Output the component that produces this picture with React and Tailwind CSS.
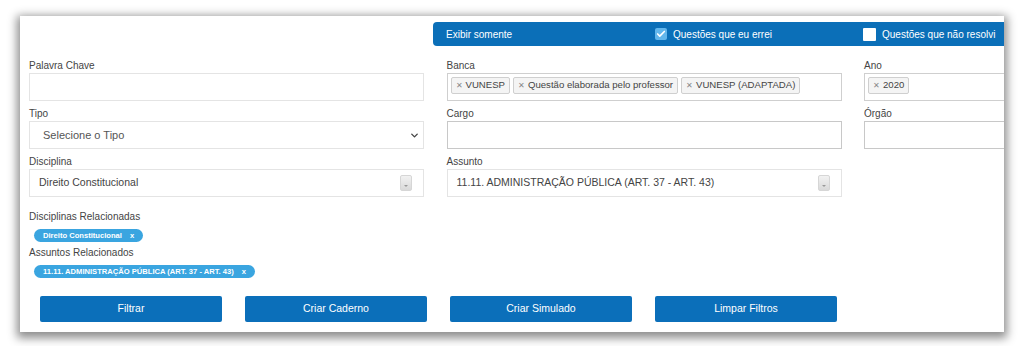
import { Check, ChevronDown } from 'lucide-react'

const FONT = { fontFamily: '"Liberation Sans", Arial, sans-serif' }

function Label({ children }) {
  return <div className="h-[14px] text-[10px] leading-[14px] text-[#444]">{children}</div>
}

function TextBox({ children, className = '' }) {
  return (
    <div className={`h-[28px] bg-white border flex items-center ${className}`}>
      {children}
    </div>
  )
}

function GrayChip({ children }) {
  return (
    <span className="h-[17px] px-[4px] flex items-center gap-[3px] bg-[#f4f4f4] border border-[#cfcfcf] rounded-[2px] text-[9.6px] text-[#444] whitespace-nowrap">
      <span className="text-[8px] text-[#888]">✕</span>
      {children}
    </span>
  )
}

function SelectArrow() {
  return (
    <div className="w-[12px] h-[16px] rounded-[2px] border border-[#d6d6d6] bg-gradient-to-b from-[#f2f2f2] to-[#d9d9d9] flex items-end justify-center pb-[3px]">
      <span className="w-0 h-0 border-x-[2px] border-x-transparent border-t-[2px] border-t-[#999]" />
    </div>
  )
}

function BluePill({ children }) {
  return (
    <span className="h-[13px] px-[9px] inline-flex items-center gap-[8px] rounded-full bg-[#3aa5e0] text-white text-[7.6px] font-bold whitespace-nowrap">
      {children}
      <span className="font-bold">x</span>
    </span>
  )
}

function ActionButton({ children }) {
  return (
    <button className="w-[182px] h-[26px] rounded-[2px] bg-[#0b6fba] text-white text-[10.5px]">
      {children}
    </button>
  )
}

export default function App() {
  return (
    <div className="w-[1024px] h-[346px] bg-white overflow-hidden pt-[16px] pl-[20px]" style={FONT}>
      <div className="w-[984px] h-[316px] bg-white overflow-hidden shadow-[0_3px_9px_3px_rgba(0,0,0,0.45)]">
        {/* top bar */}
        <div className="mt-[6px] ml-[413px] h-[24px] bg-[#0b6fb8] rounded-l-[4px] flex items-center text-white text-[10px]">
          <div className="w-[222px] pl-[13px]">Exibir somente</div>
          <div className="w-[208px] flex items-center gap-[6px]">
            <span className="w-[12px] h-[12px] rounded-[2px] bg-[#62b6ec] flex items-center justify-center">
              <Check size={10} strokeWidth={4} className="text-white" />
            </span>
            Questões que eu errei
          </div>
          <div className="flex items-center gap-[6px] whitespace-nowrap">
            <span className="w-[13px] h-[13px] bg-white rounded-[1px]" />
            Questões que não resolvi
          </div>
        </div>

        {/* fields */}
        <div className="mt-[13px] ml-[9px] grid grid-cols-[395px_395px_395px] gap-x-[22.5px] gap-y-[6px]">
          <div>
            <Label>Palavra Chave</Label>
            <TextBox className="border-[#e4e4e4]" />
          </div>
          <div>
            <Label>Banca</Label>
            <TextBox className="border-[#cfcfcf] px-[3px] pb-[3px] gap-[3px]">
              <GrayChip>VUNESP</GrayChip>
              <GrayChip>Questão elaborada pelo professor</GrayChip>
              <GrayChip>VUNESP (ADAPTADA)</GrayChip>
            </TextBox>
          </div>
          <div>
            <Label>Ano</Label>
            <TextBox className="border-[#cfcfcf] px-[3px] pb-[3px]">
              <GrayChip>2020</GrayChip>
            </TextBox>
          </div>

          <div>
            <Label>Tipo</Label>
            <TextBox className="border-[#e4e4e4] pl-[13px] pr-[3px] justify-between text-[11px] text-[#555]">
              <span>Selecione o Tipo</span>
              <ChevronDown size={11} strokeWidth={3} className="text-[#444]" />
            </TextBox>
          </div>
          <div>
            <Label>Cargo</Label>
            <TextBox className="border-[#c8c8c8]" />
          </div>
          <div>
            <Label>Órgão</Label>
            <TextBox className="border-[#c8c8c8]" />
          </div>

          <div>
            <Label>Disciplina</Label>
            <TextBox className="border-[#e4e4e4] pl-[9px] pr-[11px] justify-between text-[10.5px] text-[#444]">
              <span>Direito Constitucional</span>
              <SelectArrow />
            </TextBox>
          </div>
          <div>
            <Label>Assunto</Label>
            <TextBox className="border-[#e4e4e4] pl-[9px] pr-[11px] justify-between text-[10.5px] text-[#444]">
              <span>11.11. ADMINISTRAÇÃO PÚBLICA (ART. 37 - ART. 43)</span>
              <SelectArrow />
            </TextBox>
          </div>
          <div />
        </div>

        {/* related */}
        <div className="mt-[13px] ml-[9px]">
          <Label>Disciplinas Relacionadas</Label>
          <div className="mt-[5px] ml-[5px] h-[13px] flex">
            <BluePill>Direito Constitucional</BluePill>
          </div>
          <div className="mt-[4px]">
            <Label>Assuntos Relacionados</Label>
          </div>
          <div className="mt-[5px] ml-[5px] h-[13px] flex">
            <BluePill>11.11. ADMINISTRAÇÃO PÚBLICA (ART. 37 - ART. 43)</BluePill>
          </div>
        </div>

        {/* actions */}
        <div className="mt-[18px] ml-[20px] flex gap-[23px]">
          <ActionButton>Filtrar</ActionButton>
          <ActionButton>Criar Caderno</ActionButton>
          <ActionButton>Criar Simulado</ActionButton>
          <ActionButton>Limpar Filtros</ActionButton>
        </div>
      </div>
    </div>
  )
}
